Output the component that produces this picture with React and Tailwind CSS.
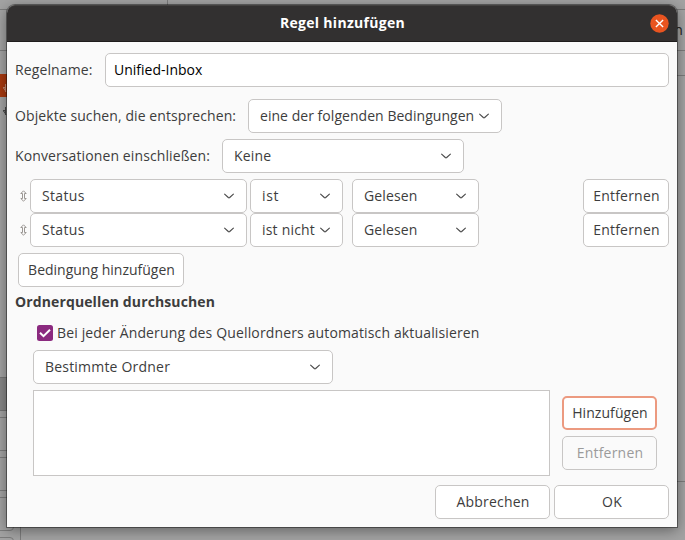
const frame = "box-border h-[34px] shrink-0 rounded-[5px] border";
const plain = "border-[#c8c6c5] bg-white";

function Select({ className, label, tracking }) {
  return (
    <div className={`${frame} ${plain} flex items-center justify-between whitespace-nowrap pr-3 pl-[11px] ${className}`}>
      <span className={`w-0 ${tracking}`}>{label}</span>
      <svg className="shrink-0" width="10" height="6" viewBox="0 0 10 6" fill="none" stroke="#484848" strokeWidth="1.15">
        <path d="M0.3 0.8 L4.3 4.5 Q5 5.1 5.7 4.5 L9.7 0.8" />
      </svg>
    </div>
  );
}

function Button({ className = "", look = plain, children }) {
  return (
    <button type="button" className={`${frame} ${look} flex items-center justify-center whitespace-nowrap pl-px ${className}`}>
      {children}
    </button>
  );
}

function Condition({ operator, tracking }) {
  return (
    <div className="flex h-[34px] items-center pr-2 pl-[13px]">
      <svg className="mr-[3px] shrink-0" width="7" height="12" viewBox="0 0 7 12" fill="none" stroke="#9a9693" strokeWidth="1">
        <path d="M3.5 0.8 L6.2 3.5 H4.5 V8.5 H6.2 L3.5 11.2 L0.8 8.5 H2.5 V3.5 H0.8 Z" />
      </svg>
      <Select className="w-[217px]" label="Status" tracking="tracking-[0.35px]" />
      <Select className="ml-[3px] w-[93px]" label={operator} tracking={tracking} />
      <Select className="ml-[9px] w-[127px]" label="Gelesen" tracking="tracking-[0.15px]" />
      <Button className="ml-auto w-[86px] tracking-[0.2px]">Entfernen</Button>
    </div>
  );
}

function Backdrop() {
  return (
    <svg className="absolute inset-0" width="685" height="540" viewBox="0 0 685 540">
      <rect width="685" height="540" fill="#a3a3a3" />
      <g stroke="#7c7c7c" fill="none">
        <path d="M0 9.5H685M167.5 0V9M0 50.5H20M665 50.5H685M665 75.5H685M665 481.5H685M20.5 527V540" />
        <path d="M0 417.5H20M0 450.5H20M0 457.5H20M0 490.5H20M0 497.5H20" />
        <path d="M0 530.5H10Q13.5 530.5 13.5 527V500M0 537.5H10Q13.5 537.5 13.5 541" />
      </g>
      <rect y="74" width="20" height="23" fill="#a8390f" />
      <path d="M5.5 84V92M3 87.5H6L3.5 88L6 91.5" stroke="#c08870" fill="none" />
      <path d="M5.5 107V115M3 110.5H6L3.5 111L6 114.5" stroke="#484848" fill="none" />
      <rect y="377" width="20" height="34" fill="#888" />
      <path d="M0 377.5H20M0 410.5H20" stroke="#757575" />
      <text x="674" y="35" fontSize="14.5" fill="#222" fontFamily="Open Sans, sans-serif">n</text>
    </svg>
  );
}

export default function App() {
  return (
    <div className="relative h-[540px] w-[685px] overflow-hidden pt-[5px] pl-[7px] font-['Open_Sans','Noto_Sans',sans-serif] text-[14px] leading-5 text-[#3d3d3d]">
      <Backdrop />
      <div className="relative flex h-[522px] w-[670px] flex-col rounded-t-[8px] bg-[#fafafa] shadow-[0_0_0_1px_rgba(0,0,0,0.4),0_3px_14px_rgba(0,0,0,0.42)]">
        <header className="flex h-[37px] shrink-0 items-center rounded-t-[8px] border-t border-b border-t-[#434140] border-b-[#1f1d1d] bg-[#323030] pr-2 pl-[28px] text-white">
          <h1 className="flex-1 pb-px text-center font-bold tracking-[0.3px]">Regel hinzufügen</h1>
          <svg className="mb-px" width="19" height="19" viewBox="0 0 19 19">
            <circle cx="9.5" cy="9.5" r="9.2" fill="#e95420" />
            <path d="M5.9 5.9L13.1 13.1M13.1 5.9L5.9 13.1" stroke="white" strokeWidth="1.4" />
          </svg>
        </header>

        <div className="mt-[11px] flex items-center pr-2 pl-2">
          <span className="w-[90px] tracking-[0.12px]">Regelname:</span>
          <div className={`${frame} ${plain} flex flex-1 items-center pl-2 text-black`}>Unified-Inbox</div>
        </div>

        <div className="mt-3 flex items-center pl-2">
          <span className="w-[233px] whitespace-nowrap tracking-[0.09px]">Objekte suchen, die entsprechen:</span>
          <Select className="w-[254px]" label="eine der folgenden Bedingungen" tracking="tracking-[0.04px]" />
        </div>

        <div className="mt-1.5 flex items-center pl-2">
          <span className="w-[207px] whitespace-nowrap tracking-[0.11px]">Konversationen einschließen:</span>
          <Select className="w-[242px]" label="Keine" tracking="tracking-[0.2px]" />
        </div>

        <div className="mt-1.5">
          <Condition operator="ist" tracking="tracking-[0.6px]" />
          <Condition operator="ist nicht" tracking="tracking-[0.2px]" />
        </div>

        <Button className="mt-1.5 ml-[11px] w-[166px]">Bedingung hinzufügen</Button>

        <h2 className="mt-[5px] ml-2 font-bold tracking-[0.12px]">Ordnerquellen durchsuchen</h2>

        <div className="mt-[11px] ml-[30px] flex h-5 items-center">
          <svg width="16" height="16" viewBox="0 0 16 16">
            <rect width="16" height="16" rx="2.5" fill="#8b2a7f" />
            <path d="M3 7.8L6.5 11.2L13 4.8" fill="none" stroke="white" strokeWidth="2" />
          </svg>
          <span className="ml-1 whitespace-nowrap tracking-[0.14px]">
            Bei jeder Änderung des Quellordners automatisch aktualisieren
          </span>
        </div>

        <Select className="mt-[7px] ml-[26px] w-[300px]" label="Bestimmte Ordner" tracking="tracking-[0.2px]" />

        <div className="mt-1.5 flex pl-[26px]">
          <div className="h-[86px] w-[517px] border border-[#c8c6c5] bg-white" />
          <div className="mt-1.5 ml-3 flex flex-col gap-1.5">
            <Button look="border-2 border-[#ec9a80] bg-white" className="w-[95px] tracking-[0.06px]">Hinzufügen</Button>
            <Button look="border-[#c8c6c5] bg-[#fafafa]" className="w-[95px] tracking-[0.2px] text-[#9b9b9b]">Entfernen</Button>
          </div>
        </div>

        <footer className="mt-[9px] flex justify-end gap-1 pr-2">
          <Button className="w-[115px] tracking-[0.2px]">Abbrechen</Button>
          <Button className="w-[115px] tracking-[0.3px]">OK</Button>
        </footer>
      </div>
    </div>
  );
}
